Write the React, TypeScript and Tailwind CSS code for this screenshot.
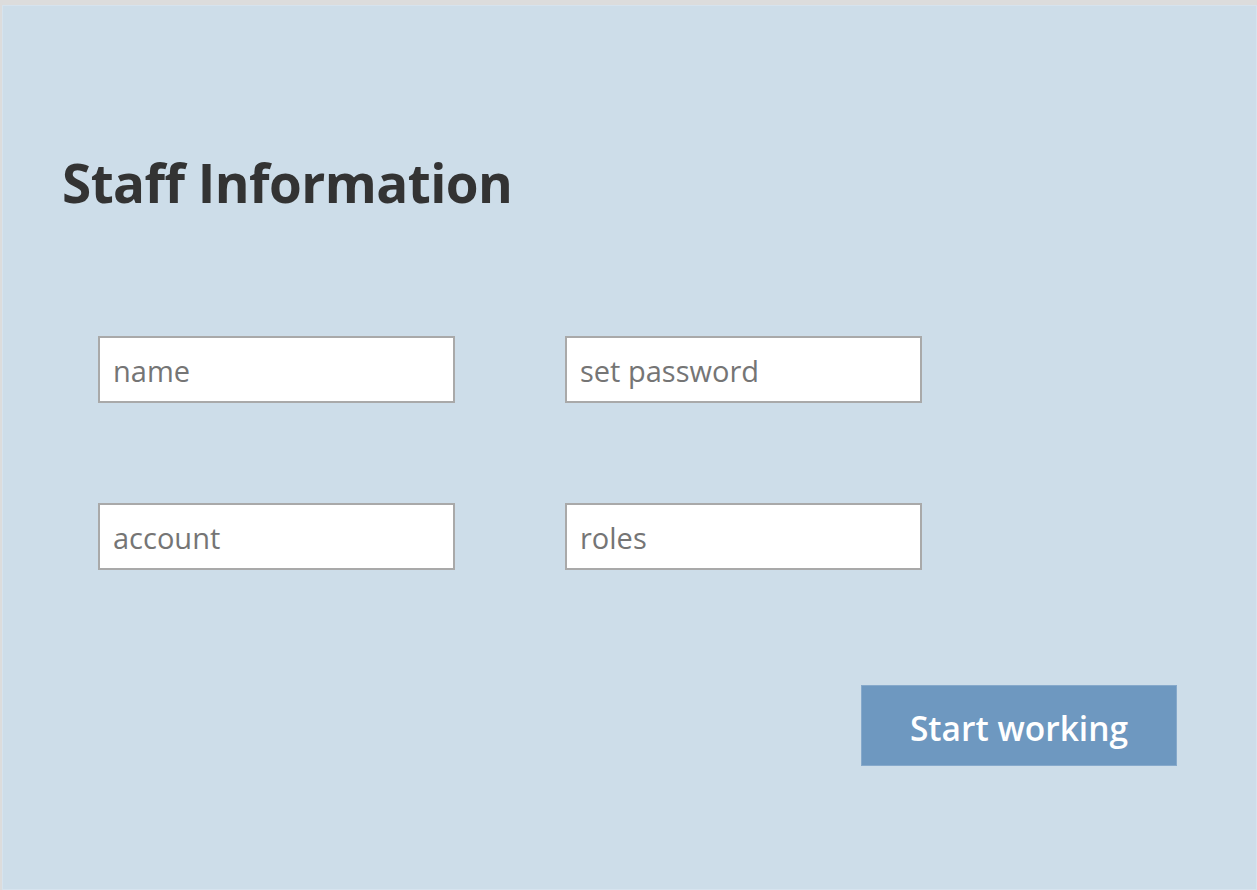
export default function App() {
  const font = { fontFamily: '"Open Sans", "Noto Sans", sans-serif' };
  return (
    <div className="w-[1257px] h-[890px] bg-[#dcdcdc] pt-[5px] pl-[2px] overflow-hidden" style={font}>
      <div className="w-full h-full bg-[#cddde9] border border-[#d6e3ee] flex flex-col">
        <h1 className="ml-[59px] mt-[142px] text-[53px] leading-[70px] font-bold text-[#333333] tracking-[-0.55px]">
          Staff Information
        </h1>
        <div className="ml-[95px] mt-[118px] grid grid-cols-[357px_357px] gap-x-[110px] gap-y-[100px]">
          {["name", "set password", "account", "roles"].map((p) => (
            <input
              key={p}
              placeholder={p}
              className="h-[67px] w-[357px] bg-white border-2 border-[#a9a9a9] px-[13px] pt-[2px] text-[29px] text-[#333] placeholder:text-[#757575] outline-none"
            />
          ))}
        </div>
        <div className="flex justify-end mr-[79px] mt-[115px]">
          <button className="w-[316px] h-[81px] pt-[5px] bg-[#6e98c0] border border-[#86a9cb] text-white text-[33.5px] font-semibold">
            Start working
          </button>
        </div>
      </div>
    </div>
  );
}
